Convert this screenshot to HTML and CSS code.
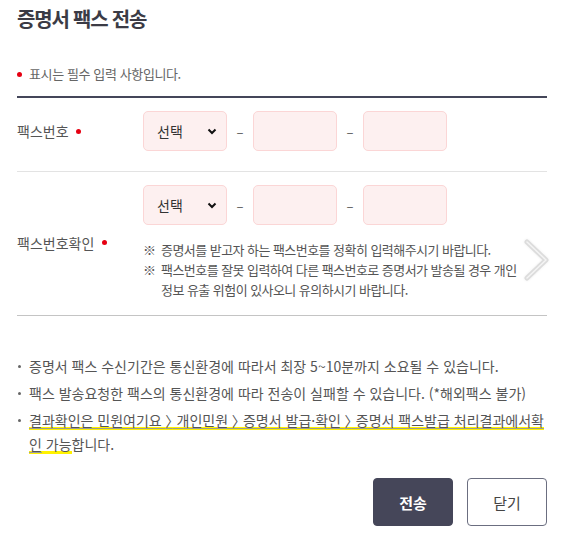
FILE: index.html
```html
<!DOCTYPE html>
<html lang="ko">
<head>
<meta charset="utf-8">
<title>증명서 팩스 전송</title>
<link rel="stylesheet" href="styles.css">
</head>
<body>
<div class="page">
  <h2 class="title">증명서 팩스 전송</h2>
  <p class="req-note"><span class="req-dot"></span>표시는 필수 입력 사항입니다.</p>

  <div class="form">
    <div class="row row-first">
      <div class="label">팩스번호 <span class="req-dot"></span></div>
      <div class="field">
        <div class="phone">
          <div class="sel"><span>선택</span><svg class="caret" width="10" height="7" viewBox="0 0 10 7"><path d="M1.5 1.5 L5 5 L8.5 1.5" fill="none" stroke="#111" stroke-width="2"/></svg></div>
          <span class="dash">–</span>
          <div class="inp"></div>
          <span class="dash">–</span>
          <div class="inp"></div>
        </div>
      </div>
    </div>
    <div class="row row-last">
      <div class="label">팩스번호확인 <span class="req-dot"></span></div>
      <div class="field">
        <div class="phone">
          <div class="sel"><span>선택</span><svg class="caret" width="10" height="7" viewBox="0 0 10 7"><path d="M1.5 1.5 L5 5 L8.5 1.5" fill="none" stroke="#111" stroke-width="2"/></svg></div>
          <span class="dash">–</span>
          <div class="inp"></div>
          <span class="dash">–</span>
          <div class="inp"></div>
        </div>
        <ul class="notes">
          <li><span class="mark">※</span>증명서를 받고자 하는 팩스번호를 정확히 입력해주시기 바랍니다.</li>
          <li><span class="mark">※</span>팩스번호를 잘못 입력하여 다른 팩스번호로 증명서가 발송될 경우 개인 정보 유출 위험이 있사오니 유의하시기 바랍니다.</li>
        </ul>
      </div>
    </div>
  </div>

  <ul class="info">
    <li>증명서 팩스 수신기간은 통신환경에 따라서 최장 5~10분까지 소요될 수 있습니다.</li>
    <li>팩스 발송요청한 팩스의 통신환경에 따라 전송이 실패할 수 있습니다. (*해외팩스 불가)</li>
    <li><span class="hl"><span class="ul">결과확인은 민원여기요 <span class="gt">〉</span> 개인민원 <span class="gt">〉</span> 증명서 발급·확인 <span class="gt">〉</span> 증명서 팩스발급 처리결과에서확인</span> 가능</span>합니다.</li>
  </ul>

  <div class="buttons">
    <button class="btn btn-primary" type="button">전송</button>
    <button class="btn btn-line" type="button">닫기</button>
  </div>

  <svg class="next-arrow" width="30" height="44" viewBox="0 0 30 44"><polyline points="5,4 24,22 5,40" fill="none" stroke="#dcdcdc" stroke-width="5" stroke-linecap="round" stroke-linejoin="round"/><polyline points="5,4 24,22 5,40" fill="none" stroke="#f4f4f4" stroke-width="1.5" stroke-linecap="round" stroke-linejoin="round"/></svg>
</div>
</body>
</html>
```
FILE: styles.css
```css
* { box-sizing: border-box; }
html, body { margin: 0; padding: 0; background: #fff; }
body {
  font-family: "Noto Sans CJK KR", "Noto Sans", sans-serif;
  color: #555;
}
.page {
  position: relative;
  width: 565px;
  height: 540px;
  padding: 0 18px 0 17px;
  overflow: hidden;
}
.title {
  margin: 0;
  padding-top: 4px;
  font-size: 20px;
  line-height: 30px;
  font-weight: 700;
  color: #3b3b45;
  letter-spacing: -0.06em;
}
.req-note {
  margin: 30px 0 0;
  font-size: 13px;
  line-height: 20px;
  color: #666;
  letter-spacing: -0.03em;
  display: flex;
  align-items: center;
}
.req-dot {
  display: inline-block;
  width: 5px;
  height: 5px;
  border-radius: 50%;
  background: #e60012;
  margin-right: 7px;
  vertical-align: middle;
}
.label .req-dot { margin: 0 0 0 4px; position: relative; top: -2px; }
.form {
  margin-top: 12px;
  border-top: 2px solid #444659;
  border-bottom: 1px solid #c4c4c4;
}
.row {
  display: flex;
  align-items: center;
}
.row-first {
  border-bottom: 1px solid #e3e3e3;
  padding: 13px 0 20px;
}
.row-last {
  padding: 13px 0 15px;
}
.label {
  width: 126px;
  flex: none;
  font-size: 14px;
  color: #555;
}
.field { flex: 1; }
.phone {
  display: flex;
  align-items: center;
}
.sel, .inp {
  width: 84px;
  height: 40px;
  background: #fdf0f0;
  border: 1px solid #fbd6d6;
  border-radius: 5px;
}
.sel {
  display: flex;
  align-items: center;
  justify-content: space-between;
  padding: 0 9px 0 13px;
  font-size: 14px;
  color: #333;
}
.caret { display: block; }
.dash {
  width: 26px;
  text-align: center;
  font-size: 13px;
  color: #555;
}
.notes {
  list-style: none;
  margin: 15px 0 0;
  padding: 0;
  width: 380px;
  font-size: 13px;
  line-height: 20px;
  letter-spacing: -0.55px;
  color: #555;
}
.notes li {
  padding-left: 18px;
  text-indent: -18px;
}
.notes .mark {
  display: inline-block;
  width: 18px;
  text-indent: 0;
}
.info {
  list-style: none;
  margin: 38px 0 0;
  padding: 0;
  font-size: 14px;
  line-height: 24px;
  color: #555;
}
.info li {
  position: relative;
  padding-left: 12px;
  margin-bottom: 3px;
}
.info li::before {
  content: "";
  position: absolute;
  left: 1px;
  top: 11px;
  width: 3px;
  height: 3px;
  border-radius: 50%;
  background: #666;
}
.gt { font-feature-settings: "palt"; }
.hl {
  background: linear-gradient(to bottom, transparent 17px, #fff200 17px, #fff200 20px, transparent 20px);
}
.ul {
  text-decoration: underline;
  text-decoration-color: #999;
  text-underline-offset: 2px;
}
.buttons {
  display: flex;
  justify-content: flex-end;
  gap: 14px;
  margin-top: 22px;
}
.btn {
  width: 80px;
  height: 48px;
  border-radius: 4px;
  font-family: inherit;
  font-size: 15px;
  cursor: pointer;
}
.btn-primary {
  background: #454659;
  border: 1px solid #454659;
  color: #fff;
  font-weight: 700;
}
.btn-line {
  background: #fff;
  border: 1px solid #6b6e80;
  color: #444;
}
.next-arrow {
  position: absolute;
  left: 522px;
  top: 238px;
  filter: drop-shadow(0 0 1px rgba(0,0,0,0.08));
}
```
